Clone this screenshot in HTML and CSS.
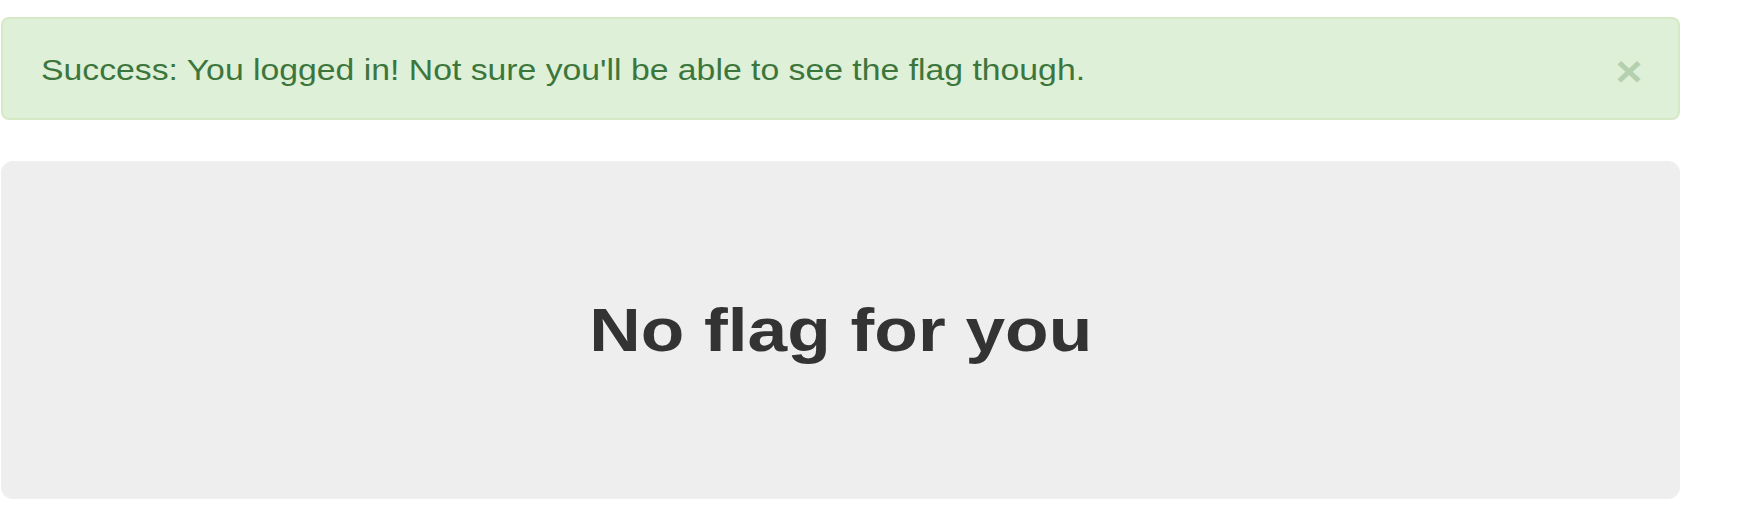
FILE: index.html
```html
<!DOCTYPE html>
<html>
<head>
<meta charset="utf-8">
<link rel="stylesheet" href="styles.css">
</head>
<body>
<div class="page">
  <div class="alert">
    <span class="alert-text">Success: You logged in! Not sure you'll be able to see the flag though.</span>
    <span class="close">×</span>
  </div>
  <div class="jumbotron">
    <h1 class="title">No flag for you</h1>
  </div>
</div>
</body>
</html>
```
FILE: styles.css
```css
html, body {
  margin: 0;
  padding: 0;
  background: #ffffff;
}
.page {
  width: 1679px;
  padding: 17px 0 0 1px;
  font-family: "Liberation Sans", Arial, sans-serif;
}
.alert {
  display: flex;
  justify-content: space-between;
  align-items: flex-start;
  background: #dff0d8;
  border: 2px solid #d6e9c6;
  border-radius: 8px;
  color: #3c763d;
  font-size: 30px;
  line-height: 40px;
  padding: 31px 35px 28px 38px;
}
.alert-text {
  display: inline-block;
  transform: scaleX(1.125);
  transform-origin: left center;
}
.close {
  display: inline-block;
  color: #b5d0ae;
  font-weight: bold;
  font-size: 42px;
  line-height: 36px;
  margin-top: 4px;
  transform: scaleX(1.1);
  transform-origin: right center;
}
.jumbotron {
  margin-top: 41px;
  height: 338px;
  background: #eeeeee;
  border-radius: 12px;
  display: flex;
  align-items: center;
  justify-content: center;
}
.title {
  margin: 0;
  font-size: 62px;
  line-height: 62px;
  font-weight: bold;
  color: #333333;
  transform: scaleX(1.15);
}
```
